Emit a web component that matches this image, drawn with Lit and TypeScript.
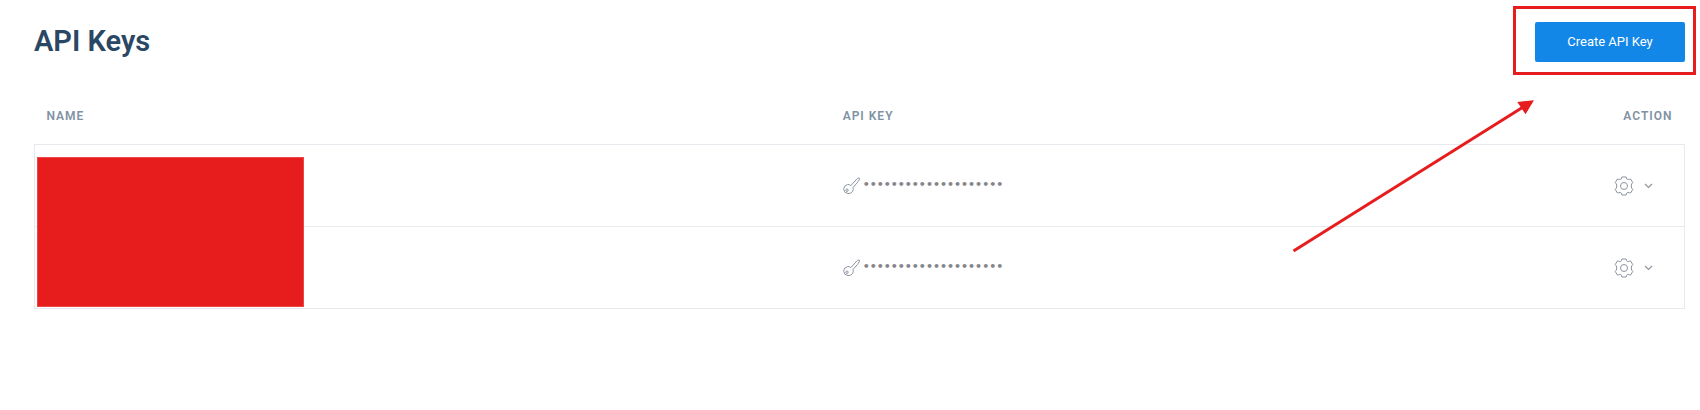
import { LitElement, html, css, svg } from "lit";
import { customElement, property } from "lit/decorators.js";

const MASK = "•".repeat(20);

const keyIcon = html`<svg class="key" viewBox="0 -2 18 20" width="18" height="20" aria-hidden="true">
  <path d="M7.900 8.600 L14 1.800 Q14.700 1 15.600 1 H16.300 V2.900 L15.300 4.200 L14.600 5.300 L10 10.500 Q10.800 12.400 9.500 14.600 Q7.800 16.800 5 16.600 Q1 16 .6 12.300 Q.9 8.300 4.700 7.500 Q6.600 7.300 7.900 8.600 Z" />
  <circle cx="4" cy="13.200" r="1.200" />
</svg>`;

const gearPath = svg`<path d="M7.800 1 H12.200 L12.500 2.800 Q13.700 3.900 15.200 3.300 L16.600 3 L18.800 6.600 L17.600 8 Q16.900 10 17.600 12 L18.800 13.400 L16.600 17 L15.200 16.700 Q13.700 16.100 12.500 17.200 L12.200 19 H7.800 L7.500 17.200 Q6.300 16.100 4.800 16.700 L3.400 17 L1.200 13.400 L2.400 12 Q3.100 10 2.400 8 L1.200 6.600 L3.400 3 L4.800 3.300 Q6.300 3.900 7.500 2.800 Z" stroke-linejoin="round" /><circle cx="10" cy="10" r="3.500" />`;

@customElement("api-key-table")
export class ApiKeyTable extends LitElement {
  @property({ type: Array }) rows: string[] = [];

  static styles = css`
    :host {
      display: block;
      position: relative;
    }
    .table {
      width: 100%;
      border-collapse: collapse;
      table-layout: fixed;
    }
    .head {
      height: 57px;
      box-sizing: border-box;
      padding: 2px 12px 0;
      text-align: left;
      font-size: 12px;
      line-height: 16px;
      font-weight: 600;
      letter-spacing: 1px;
      text-transform: uppercase;
      color: #8092a4;
    }
    .name {
      width: 48.25%;
    }
    .action {
      width: 140px;
      text-align: right;
    }
    .body {
      border: 1px solid #e6eaee;
    }
    .cell {
      height: 82px;
      box-sizing: border-box;
      padding: 0 12px;
      border-top: 1px solid #e6eaee;
    }
    .secret {
      display: flex;
      align-items: center;
      gap: 2px;
      color: #85858a;
      font-family: "DejaVu Sans", sans-serif;
      font-size: 11px;
      font-weight: 700;
      line-height: 20px;
    }
    .menu-cell {
      padding: 2px 31px 0 0;
      text-align: right;
    }
    .menu {
      display: inline-flex;
      align-items: center;
      gap: 10px;
      padding: 0;
      border: 0;
      background: none;
      cursor: pointer;
      vertical-align: middle;
    }
    svg {
      fill: none;
      stroke: #8d959f;
      stroke-width: 1;
    }
    .redaction {
      position: absolute;
      left: 3px;
      top: 70px;
      width: 267px;
      height: 150px;
      box-sizing: border-box;
      border: 1px solid #ee4646;
      background: #e71d1d;
    }
  `;

  render() {
    return html`
      <table class="table">
        <thead>
          <tr>
            <th class="head name" scope="col">Name</th>
            <th class="head" scope="col">API Key</th>
            <th class="head action" scope="col">Action</th>
          </tr>
        </thead>
        <tbody class="body">
          ${this.rows.map(
            (secret) => html`<tr>
              <td class="cell"></td>
              <td class="cell"><div class="secret">${keyIcon}<span>${secret}</span></div></td>
              <td class="cell menu-cell">
                <button class="menu" type="button" aria-label="Key actions">
                  <svg viewBox="0 0 20 20" width="20" height="20" aria-hidden="true">${gearPath}</svg>
                  <svg viewBox="0 0 9 6" width="9" height="6" aria-hidden="true"><path d="M1 1 L4.5 4.5 L8 1" stroke-width="1.2" /></svg>
                </button>
              </td>
            </tr>`
          )}
        </tbody>
      </table>
      <div class="redaction"></div>
    `;
  }
}

@customElement("app-root")
export class AppRoot extends LitElement {
  static styles = css`
    :host {
      display: block;
      position: relative;
      padding: 22px 15px 32px 34px;
      background: #fff;
      font-family: Roboto, sans-serif;
    }
    .bar {
      display: flex;
      align-items: center;
      justify-content: space-between;
      margin-bottom: 25px;
    }
    .title {
      margin: 0;
      font-size: 29px;
      line-height: 38px;
      padding-bottom: 2px;
      font-weight: 600;
      color: #2a4764;
    }
    .create {
      width: 150px;
      height: 40px;
      padding: 0;
      border: 0;
      border-radius: 2px;
      background: #1287e8;
      color: #fff;
      font-family: inherit;
      font-size: 13px;
      line-height: 20px;
      cursor: pointer;
    }
    .frame {
      position: absolute;
      top: 6px;
      right: 4px;
      width: 183px;
      height: 69px;
      box-sizing: border-box;
      border: 3px solid #e71d1d;
      pointer-events: none;
    }
    .arrow {
      position: absolute;
      top: 96px;
      right: 160px;
      pointer-events: none;
    }
  `;

  render() {
    return html`
      <header class="bar">
        <h1 class="title">API Keys</h1>
        <button class="create" type="button">Create API Key</button>
      </header>
      <api-key-table .rows=${[MASK, MASK]}></api-key-table>
      <div class="frame"></div>
      <svg class="arrow" viewBox="0 0 250 160" width="250" height="160" aria-hidden="true">
        <path d="M3.500 155 L234 10.500" stroke="#e71d1d" stroke-width="3" />
        <path d="M244 4.300 L227.300 6 L235.500 18.200 Z" fill="#e71d1d" />
      </svg>
    `;
  }
}
